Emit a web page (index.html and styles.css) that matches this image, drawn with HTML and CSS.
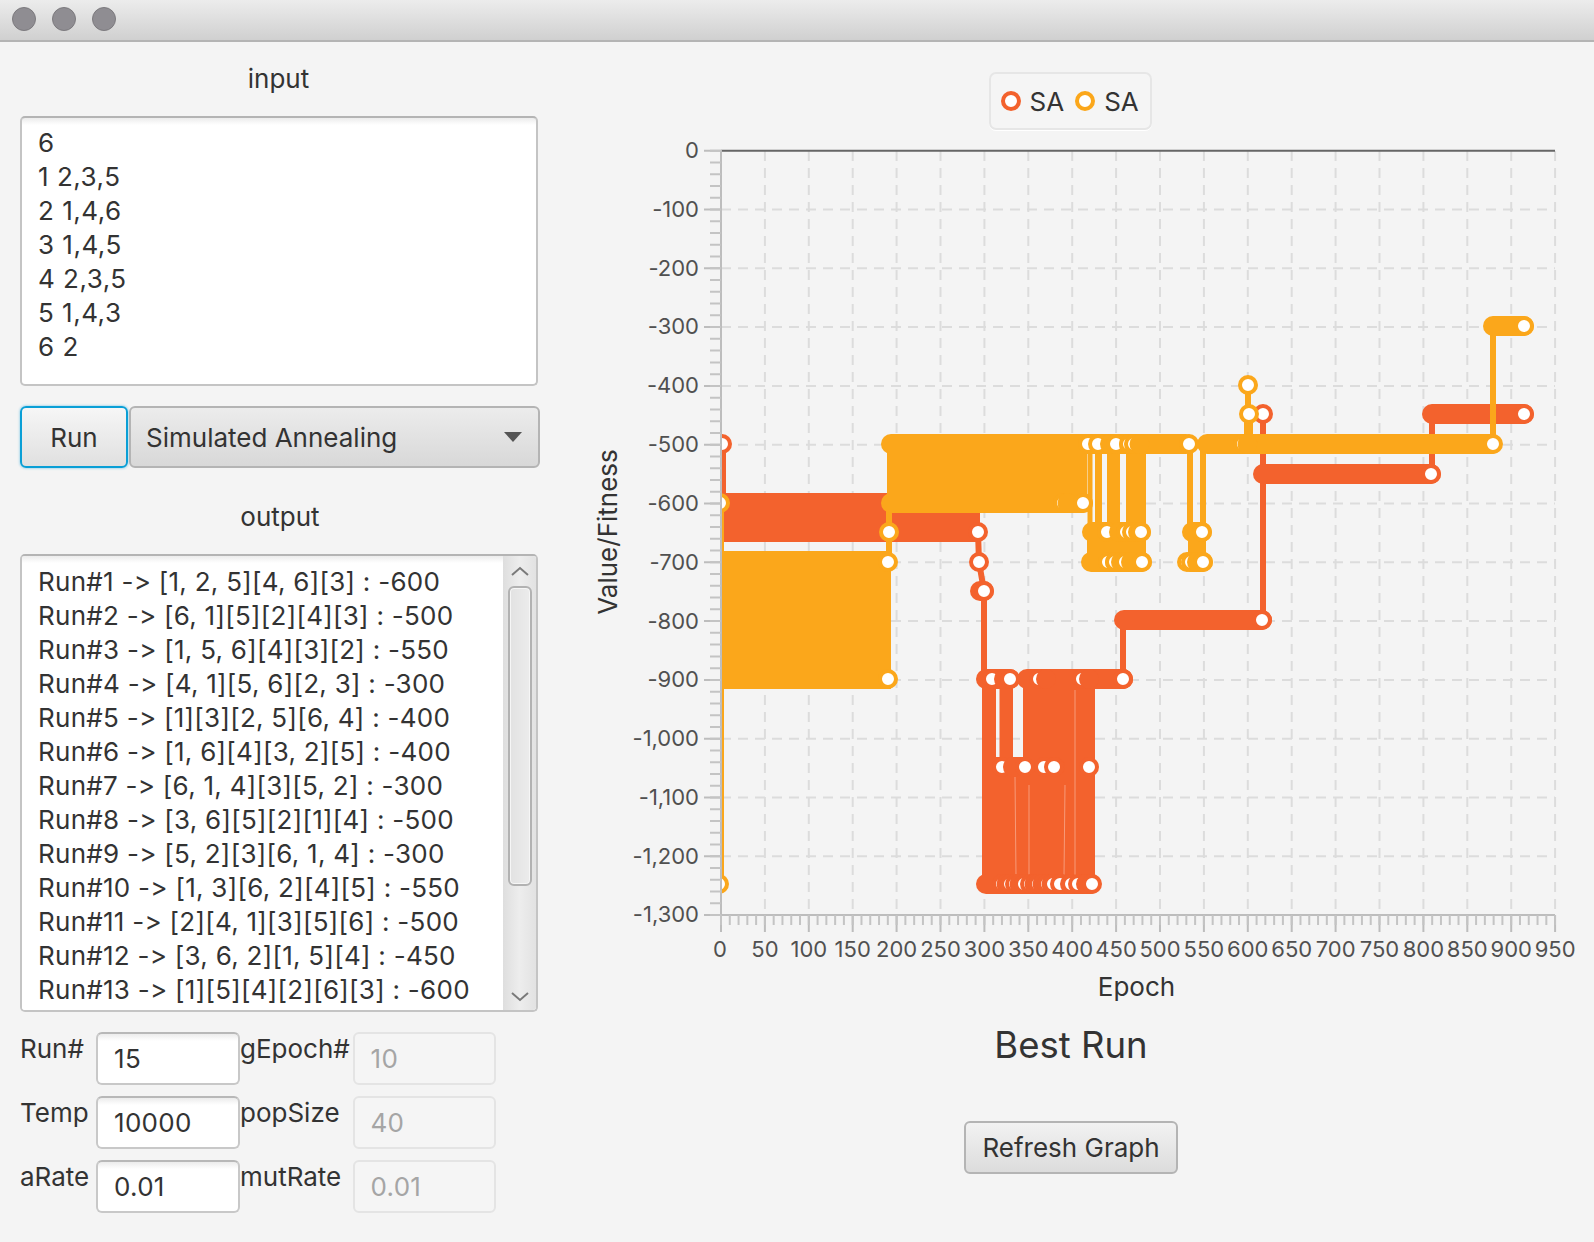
FILE: index.html
```html
<!DOCTYPE html>
<html lang="en">
<head>
    <meta charset="UTF-8">
    <meta name="viewport" content="width=device-width, initial-scale=1.0">
    <title>Graph Partitioning</title>
    <link rel="stylesheet" href="styles.css">
</head>
<body>
    <div class="titlebar">
        <span class="light"></span>
        <span class="light"></span>
        <span class="light"></span>
    </div>

    <div class="content">
        <div class="left-panel">
            <div class="pane-label">input</div>
            <div class="text-area">
                <div>6</div>
                <div>1 2,3,5</div>
                <div>2 1,4,6</div>
                <div>3 1,4,5</div>
                <div>4 2,3,5</div>
                <div>5 1,4,3</div>
                <div>6 2</div>
            </div>

            <div class="run-row">
                <button class="btn run-btn">Run</button>
                <div class="combo">
                    <span>Simulated Annealing</span>
                    <span class="combo-arrow"></span>
                </div>
            </div>

            <div class="pane-label output-label">output</div>
            <div class="output-box">
                <div class="output-list">
                    <div>Run#1 -&gt; [1, 2, 5][4, 6][3] : -600</div>
                    <div>Run#2 -&gt; [6, 1][5][2][4][3] : -500</div>
                    <div>Run#3 -&gt; [1, 5, 6][4][3][2] : -550</div>
                    <div>Run#4 -&gt; [4, 1][5, 6][2, 3] : -300</div>
                    <div>Run#5 -&gt; [1][3][2, 5][6, 4] : -400</div>
                    <div>Run#6 -&gt; [1, 6][4][3, 2][5] : -400</div>
                    <div>Run#7 -&gt; [6, 1, 4][3][5, 2] : -300</div>
                    <div>Run#8 -&gt; [3, 6][5][2][1][4] : -500</div>
                    <div>Run#9 -&gt; [5, 2][3][6, 1, 4] : -300</div>
                    <div>Run#10 -&gt; [1, 3][6, 2][4][5] : -550</div>
                    <div>Run#11 -&gt; [2][4, 1][3][5][6] : -500</div>
                    <div>Run#12 -&gt; [3, 6, 2][1, 5][4] : -450</div>
                    <div>Run#13 -&gt; [1][5][4][2][6][3] : -600</div>
                </div>
                <div class="scrollbar">
                    <svg class="scroll-arrow" width="20" height="12" viewBox="0 0 20 12"><path d="M2 10 L10 3 L18 10"/></svg>
                    <div class="scroll-track"><div class="scroll-thumb"></div></div>
                    <svg class="scroll-arrow" width="20" height="12" viewBox="0 0 20 12"><path d="M2 2 L10 9 L18 2"/></svg>
                </div>
            </div>

            <div class="params">
                <label>Run#</label>
                <div class="field">15</div>
                <label>gEpoch#</label>
                <div class="field disabled">10</div>
                <label>Temp</label>
                <div class="field">10000</div>
                <label>popSize</label>
                <div class="field disabled">40</div>
                <label>aRate</label>
                <div class="field">0.01</div>
                <label>mutRate</label>
                <div class="field disabled">0.01</div>
            </div>
        </div>

        <div class="right-panel">
            <div class="chart-head">
                <div class="legend">
                    <span class="legend-dot red"></span><span>SA</span>
                    <span class="legend-dot yellow"></span><span>SA</span>
                </div>
            </div>

            <svg class="chart" width="1014" height="875" viewBox="580 130 1014 875">
                <defs>
                    <clipPath id="plotClip"><rect x="721" y="150" width="840" height="765"/></clipPath>
                </defs>

                <path class="grid" d="M764.9 151V915M808.8 151V915M852.7 151V915M896.6 151V915M940.5 151V915M984.4 151V915M1028.3 151V915M1072.2 151V915M1116.1 151V915M1160 151V915M1203.9 151V915M1247.8 151V915M1291.7 151V915M1335.6 151V915M1379.5 151V915M1423.4 151V915M1467.3 151V915M1511.2 151V915M1555.1 151V915"/>
                <path class="grid" d="M721 209.5H1555M721 268.3H1555M721 327.1H1555M721 385.9H1555M721 444.7H1555M721 503.5H1555M721 562.3H1555M721 621.1H1555M721 679.9H1555M721 738.7H1555M721 797.5H1555M721 856.3H1555"/>

                <g clip-path="url(#plotClip)">
                    <!-- first series -->
                    <g class="red">
                        <path class="line" d="M723 444V493M978 532L979 562L984 591V679M1123 620V679M1263 414V620M1432 414V474"/>
                        <rect x="721" y="493" width="259" height="49"/>
                        <rect x="970" y="581" width="24" height="20" rx="10"/>
                        <rect x="976" y="669" width="44" height="20" rx="10"/>
                        <rect x="1017" y="669" width="116" height="20" rx="10"/>
                        <rect x="982" y="679" width="14" height="90"/>
                        <rect x="999.5" y="679" width="13.5" height="90"/>
                        <rect x="1023" y="679" width="72" height="90"/>
                        <rect x="982" y="757" width="113" height="127"/>
                        <rect x="992" y="757" width="106" height="20" rx="10"/>
                        <rect x="976" y="874" width="125" height="20" rx="10"/>
                        <rect x="1114" y="610" width="158" height="20" rx="10"/>
                        <rect x="1253" y="464" width="188" height="20" rx="10"/>
                        <rect x="1422" y="404" width="112" height="20" rx="10"/>
                        <path class="seam" d="M1015 777L1016 876M1029 785V876M1065 785L1064 876M1075 690V876"/>

                        <circle class="dot" cx="722" cy="444" r="8"/>
                        <circle class="dot" cx="978" cy="532" r="8"/>
                        <circle class="dot" cx="979" cy="562" r="8"/>
                        <circle class="dot" cx="984" cy="591" r="8"/>

                        <circle class="dot" cx="992" cy="679" r="8"/><circle class="cover" cx="1004" cy="679" r="10"/>
                        <circle class="dot" cx="1010" cy="679" r="8"/>
                        <circle class="dot" cx="1039" cy="679" r="8"/><circle class="cover" cx="1046" cy="679" r="10"/>
                        <circle class="dot" cx="1082" cy="679" r="8"/><circle class="cover" cx="1089" cy="679" r="10"/>
                        <circle class="dot" cx="1123" cy="679" r="8"/>

                        <circle class="dot" cx="1002" cy="767" r="8"/><circle class="cover" cx="1013" cy="767" r="10"/>
                        <circle class="dot" cx="1025" cy="767" r="8"/>
                        <circle class="dot" cx="1044" cy="767" r="8"/><circle class="cover" cx="1055" cy="767" r="10"/>
                        <circle class="dot" cx="1054" cy="767" r="8"/>
                        <circle class="dot" cx="1089" cy="767" r="8"/>

                        <circle class="dot" cx="1002" cy="884" r="8"/><circle class="cover" cx="1006.5" cy="884" r="10"/>
                        <circle class="dot" cx="1010" cy="884" r="8"/><circle class="cover" cx="1019" cy="884" r="10"/>
                        <circle class="dot" cx="1015" cy="884" r="8"/><circle class="cover" cx="1019.5" cy="884" r="10"/>
                        <circle class="dot" cx="1024" cy="884" r="8"/><circle class="cover" cx="1034" cy="884" r="10"/>
                        <circle class="dot" cx="1030" cy="884" r="8"/><circle class="cover" cx="1034.5" cy="884" r="10"/>
                        <circle class="dot" cx="1038" cy="884" r="8"/><circle class="cover" cx="1042.5" cy="884" r="10"/>
                        <circle class="dot" cx="1047" cy="884" r="8"/><circle class="cover" cx="1051.5" cy="884" r="10"/>
                        <circle class="dot" cx="1053" cy="884" r="8"/><circle class="cover" cx="1062" cy="884" r="10"/>
                        <circle class="dot" cx="1060" cy="884" r="8"/><circle class="cover" cx="1070" cy="884" r="10"/>
                        <circle class="dot" cx="1071" cy="884" r="8"/><circle class="cover" cx="1081" cy="884" r="10"/>
                        <circle class="dot" cx="1078" cy="884" r="8"/><circle class="cover" cx="1086" cy="884" r="10"/>
                        <circle class="dot" cx="1092" cy="884" r="8"/>

                        <circle class="dot" cx="1262" cy="620" r="8"/>
                        <circle class="dot" cx="1431" cy="474" r="8"/>
                        <circle class="dot" cx="1263" cy="414" r="8"/>
                        <circle class="dot" cx="1524" cy="414" r="8"/>
                        <circle class="dot" cx="1123" cy="679" r="8"/>
                    </g>

                    <!-- second series -->
                    <g class="yellow">
                        <path class="line" d="M721 503V884M889 503V562M1248 385V444M1493 326V444"/>
                        <path class="line wide" d="M1248.5 414V444"/>
                        <rect x="722" y="551" width="169" height="138"/>
                        <rect x="881" y="434" width="315" height="20" rx="10"/>
                        <rect x="881" y="493" width="212" height="20" rx="10"/>
                        <rect x="887" y="444" width="200" height="60"/>
                        <rect x="1087.5" y="444" width="5" height="90"/>
                        <rect x="1095" y="444" width="7" height="90"/>
                        <rect x="1107" y="444" width="13" height="90"/>
                        <rect x="1126" y="444" width="20" height="90"/>
                        <rect x="1187" y="444" width="6" height="90"/>
                        <rect x="1200" y="444" width="6" height="90"/>
                        <rect x="1082" y="522" width="69" height="20" rx="10"/>
                        <rect x="1081" y="552" width="71" height="20" rx="10"/>
                        <rect x="1087" y="532" width="59" height="30"/>
                        <rect x="1182" y="522" width="30" height="20" rx="10"/>
                        <rect x="1181" y="552" width="32" height="20" rx="10"/>
                        <rect x="1188" y="532" width="18" height="30"/>
                        <rect x="1197" y="434" width="305" height="20" rx="10"/>
                        <rect x="1483" y="316" width="51" height="20" rx="10"/>

                        <circle class="dot" cx="720" cy="503" r="8"/>
                        <circle class="dot" cx="719" cy="884" r="8"/>
                        <circle class="dot" cx="889" cy="532" r="8"/>
                        <circle class="dot" cx="888" cy="562" r="8"/>
                        <circle class="dot" cx="888" cy="679" r="8"/>

                        <circle class="dot" cx="1063" cy="503" r="8"/><circle class="cover" cx="1067.5" cy="503" r="10"/>
                        <circle class="dot" cx="1083" cy="503" r="8"/>

                        <circle class="dot" cx="1088" cy="444" r="8"/><circle class="cover" cx="1099" cy="444" r="10"/>
                        <circle class="dot" cx="1098" cy="444" r="8"/><circle class="cover" cx="1110" cy="444" r="10"/>
                        <circle class="dot" cx="1116" cy="444" r="8"/><circle class="cover" cx="1129" cy="444" r="10"/>
                        <circle class="dot" cx="1129" cy="444" r="8"/><circle class="cover" cx="1134.5" cy="444" r="10"/>
                        <circle class="dot" cx="1134" cy="444" r="8"/><circle class="cover" cx="1139.5" cy="444" r="10"/>
                        <circle class="dot" cx="1189" cy="444" r="8"/>
                        <circle class="dot" cx="1243" cy="444" r="8"/><circle class="cover" cx="1247.5" cy="444" r="10"/>
                        <circle class="dot" cx="1493" cy="444" r="8"/>

                        <circle class="dot" cx="1107" cy="532" r="8"/><circle class="cover" cx="1119" cy="532" r="10"/>
                        <circle class="dot" cx="1126" cy="532" r="8"/><circle class="cover" cx="1133" cy="532" r="10"/>
                        <circle class="dot" cx="1132" cy="532" r="8"/><circle class="cover" cx="1138" cy="532" r="10"/>
                        <circle class="dot" cx="1141" cy="532" r="8"/>
                        <circle class="dot" cx="1202" cy="532" r="8"/>

                        <circle class="dot" cx="1108" cy="562" r="8"/><circle class="cover" cx="1115" cy="562" r="10"/>
                        <circle class="dot" cx="1115" cy="562" r="8"/><circle class="cover" cx="1121" cy="562" r="10"/>
                        <circle class="dot" cx="1125" cy="562" r="8"/><circle class="cover" cx="1131" cy="562" r="10"/>
                        <circle class="dot" cx="1142" cy="562" r="8"/>
                        <circle class="dot" cx="1187" cy="562" r="8"/><circle class="cover" cx="1191.5" cy="562" r="10"/>
                        <circle class="dot" cx="1191" cy="562" r="8"/><circle class="cover" cx="1197" cy="562" r="10"/>
                        <circle class="dot" cx="1203" cy="562" r="8"/>

                        <circle class="dot" cx="1248" cy="385" r="8"/>
                        <circle class="dot" cx="1249" cy="414" r="8"/>
                        <circle class="dot" cx="1524" cy="326" r="8"/>
                    </g>
                </g>

                <path class="axis-top" d="M721 150.7H1555"/>
                <path class="axis" d="M721 150V916M720 915H1555"/>
                <path class="axis tick" d="M704 150.7H721M704 209.5H721M704 268.3H721M704 327.1H721M704 385.9H721M704 444.7H721M704 503.5H721M704 562.3H721M704 621.1H721M704 679.9H721M704 738.7H721M704 797.5H721M704 856.3H721M704 915.1H721"/>
                <line class="minor" x1="715.5" y1="149.7" x2="715.5" y2="916" stroke-width="11" stroke-dasharray="2 9.76"/>
                <path class="axis tick" d="M721 915V932M764.9 915V932M808.8 915V932M852.7 915V932M896.6 915V932M940.5 915V932M984.4 915V932M1028.3 915V932M1072.2 915V932M1116.1 915V932M1160 915V932M1203.9 915V932M1247.8 915V932M1291.7 915V932M1335.6 915V932M1379.5 915V932M1423.4 915V932M1467.3 915V932M1511.2 915V932M1555.1 915V932"/>
                <line class="minor" x1="720" y1="920" x2="1556" y2="920" stroke-width="10" stroke-dasharray="2 6.78"/>

                <g class="y-labels">
                    <text x="699" y="158">0</text>
                    <text x="699" y="217">-100</text>
                    <text x="699" y="276">-200</text>
                    <text x="699" y="334">-300</text>
                    <text x="699" y="393">-400</text>
                    <text x="699" y="452">-500</text>
                    <text x="699" y="511">-600</text>
                    <text x="699" y="570">-700</text>
                    <text x="699" y="629">-800</text>
                    <text x="699" y="687">-900</text>
                    <text x="699" y="746">-1,000</text>
                    <text x="699" y="805">-1,100</text>
                    <text x="699" y="864">-1,200</text>
                    <text x="699" y="922">-1,300</text>
                </g>
                <g class="x-labels">
                    <text x="720" y="957">0</text>
                    <text x="764.9" y="957">50</text>
                    <text x="808.8" y="957">100</text>
                    <text x="852.7" y="957">150</text>
                    <text x="896.6" y="957">200</text>
                    <text x="940.5" y="957">250</text>
                    <text x="984.4" y="957">300</text>
                    <text x="1028.3" y="957">350</text>
                    <text x="1072.2" y="957">400</text>
                    <text x="1116.1" y="957">450</text>
                    <text x="1160" y="957">500</text>
                    <text x="1203.9" y="957">550</text>
                    <text x="1247.8" y="957">600</text>
                    <text x="1291.7" y="957">650</text>
                    <text x="1335.6" y="957">700</text>
                    <text x="1379.5" y="957">750</text>
                    <text x="1423.4" y="957">800</text>
                    <text x="1467.3" y="957">850</text>
                    <text x="1511.2" y="957">900</text>
                    <text x="1555.1" y="957">950</text>
                </g>
                <text class="axis-title" x="1136.5" y="996">Epoch</text>
                <text class="axis-title" transform="translate(617 532) rotate(-90)">Value/Fitness</text>
            </svg>

            <div class="chart-foot">
                <div class="best-run">Best Run</div>
                <button class="btn refresh-btn">Refresh Graph</button>
            </div>
        </div>
    </div>
</body>
</html>
```

FILE: styles.css
```css
* { box-sizing: border-box; }
body { margin: 0; height: 1242px; overflow: hidden; background-color: #f4f4f4; font-family: Inter, "Liberation Sans", sans-serif; font-size: 26px; color: #333; font-variant-ligatures: none; font-feature-settings: "calt" 0; }

.titlebar { height: 42px; padding-left: 12px; display: flex; align-items: center; gap: 16px; padding-bottom: 2px; background: linear-gradient(#ececec, #d0d0d0); border-bottom: 2px solid #b4b4b4; }
.light { width: 24px; height: 24px; border-radius: 50%; background: #8f8d92; border: 1px solid #7c7a7e; }

.content { display: flex; }
.left-panel { width: 580px; padding: 20px 0 0 20px; }
.right-panel { width: 1014px; padding-top: 30px; }

.pane-label { width: 517px; height: 34px; line-height: 34px; text-align: center; }
.output-label { margin-top: 32px; width: 520px; }

.text-area { width: 518px; height: 270px; margin-top: 20px; padding: 8px 16px; line-height: 34px; letter-spacing: 0.5px; background: linear-gradient(#ececec, #fff 7px); border: 2px solid #c4c4c4; border-top-color: #b4b4b4; border-radius: 5px; }

.run-row { display: flex; gap: 1px; margin-top: 20px; }
.btn { font: inherit; color: #333; cursor: pointer; border-radius: 6px; background: linear-gradient(#f2f2f2, #dcdcdc); border: 2px solid #b4b4b4; }
.run-btn { width: 108px; height: 62px; padding: 0; border-color: #0a9fd6; box-shadow: 0 0 2px 1px #b5dcec; background: linear-gradient(#f6f6f6, #e0e0e0); }
.combo { width: 411px; height: 62px; padding: 0 15px; display: flex; align-items: center; justify-content: space-between; background: linear-gradient(#ececec, #d8d8d8); border: 2px solid #b4b4b4; border-radius: 6px; }
.combo-arrow { width: 0; height: 0; margin-right: 1px; border-left: 9px solid transparent; border-right: 9px solid transparent; border-top: 10px solid #555; }

.output-box { display: flex; width: 518px; height: 458px; margin-top: 20px; background: #fff; border: 2px solid #c4c4c4; border-top-color: #b4b4b4; border-radius: 5px; overflow: hidden; }
.output-list { flex: 1; padding: 9px 16px 0; line-height: 34px; letter-spacing: 0.27px; white-space: nowrap; overflow: hidden; background: linear-gradient(#ececec, #fff 7px); }
.scrollbar { width: 33px; display: flex; flex-direction: column; align-items: center; background: linear-gradient(90deg, #dedede, #ededed 50%, #e2e2e2); padding-top: 9px; }
.scroll-arrow { flex: none; }
.scroll-arrow path { fill: none; stroke: #7a7a7a; stroke-width: 2; }
.scroll-track { flex: 1; width: 24px; padding-top: 9px; }
.scroll-thumb { height: 300px; background: linear-gradient(90deg, #e2e2e2, #ececec); border: 2px solid #b2b2b2; border-radius: 6px; box-shadow: inset 0 0 0 1px #f6f6f6; }
.scrollbar .scroll-arrow:last-child { margin-bottom: 7px; }

.params { display: grid; grid-template-columns: 76px 144px 112.5px 143.5px; row-gap: 11px; margin-top: 20px; }
.params label { line-height: 34px; }
.field { height: 53px; padding: 0 16px; line-height: 49px; letter-spacing: 0.3px; background: linear-gradient(#ececec, #fff 7px); border: 2px solid #c8c8c8; border-top-color: #b8b8b8; border-radius: 6px; }
.field.disabled { color: #a5a5a5; background: #f5f5f5; border-color: #e4e4e4; }

.chart-head, .chart-foot { display: flex; flex-direction: column; align-items: center; padding-right: 34px; }
.chart-foot { padding-right: 32px; }
.legend { width: 163px; height: 58px; display: flex; align-items: center; padding-left: 10px; background: #f5f5f5; border: 2px solid #e6e6e6; border-radius: 7px; box-shadow: 0 1px 0 #fff; }
.legend-dot { width: 20px; height: 20px; margin-right: 9px; background: #fff; border: 4px solid; border-radius: 50%; }
.legend-dot.red { border-color: #f3622d; }
.legend-dot.yellow { border-color: #fba71b; margin-left: 11px; }

.chart { display: block; }
.grid { fill: none; stroke: #dcdcdc; stroke-width: 2; stroke-dasharray: 10 7; }
.axis { fill: none; stroke: #bdbdbd; stroke-width: 2; }
.axis.tick { stroke-width: 2; }
.axis-top { fill: none; stroke: #666; stroke-width: 2; }
.minor { stroke: #c4c4c4; fill: none; }

.red rect { fill: #f3622d; }
.yellow rect { fill: #fba71b; }
.line { fill: none; stroke-width: 6; }
.line.wide { stroke-width: 9; }
.red .line { stroke: #f3622d; }
.yellow .line { stroke: #fba71b; }
.seam { fill: none; stroke: #f89a78; stroke-width: 1; }
.dot { fill: #fff; stroke-width: 4; }
.red .dot { stroke: #f3622d; }
.yellow .dot { stroke: #fba71b; }
.red .cover { fill: #f3622d; }
.yellow .cover { fill: #fba71b; }

.y-labels text { text-anchor: end; font-size: 22px; fill: #505050; }
.x-labels text { text-anchor: middle; font-size: 22px; fill: #505050; }
.axis-title { text-anchor: middle; font-size: 26px; fill: #333; }

.best-run { height: 44px; line-height: 44px; margin-top: 18px; font-size: 36.5px; }
.refresh-btn { width: 214px; height: 53px; margin-top: 54px; padding: 0; }
```
